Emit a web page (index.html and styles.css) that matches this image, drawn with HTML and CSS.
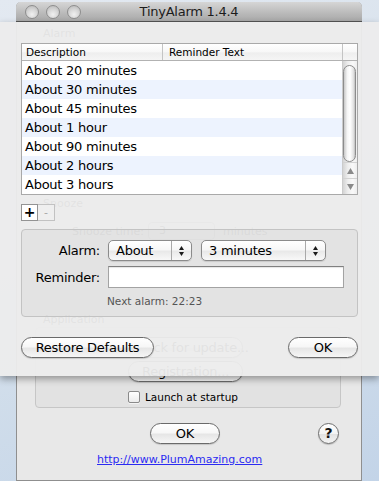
FILE: index.html
```html
<!DOCTYPE html>
<html lang="en">
<head>
<meta charset="utf-8">
<title>TinyAlarm 1.4.4</title>
<link rel="stylesheet" href="styles.css">
</head>
<body>
<div class="window">
  <div class="titlebar">
    <div class="lights">
      <span class="light"></span><span class="light"></span><span class="light"></span>
    </div>
    <div class="title">TinyAlarm 1.4.4</div>
    <div class="title-pad"></div>
  </div>
  <div class="wcontent">
    <div class="sec-h">Alarm</div>
    <div class="hidden-area"></div>
    <div class="sec-h">Snooze</div>
    <div class="snooze-row">
      <span class="snooze-label">Snooze time:</span>
      <span class="mini-pop">3</span>
      <span>minutes</span>
    </div>
    <div class="sec-h app-h">Application</div>
    <div class="appbox">
      <div class="aqua wide">Check for update...</div>
      <div class="aqua wide reg">Registration...</div>
      <div class="check-row"><span class="checkbox"></span><span>Launch at startup</span></div>
    </div>
    <div class="ok-row">
      <div class="aqua ok-main">OK</div>
      <div class="help">?</div>
    </div>
    <a class="link" href="#">http://www.PlumAmazing.com</a>
  </div>
</div>

<div class="sheet">
  <div class="table">
    <div class="thead">
      <div class="th th1">Description</div>
      <div class="th th2">Reminder Text</div>
      <div class="th thc"></div>
    </div>
    <div class="tbody">
      <div class="rows">
        <div class="row"><span class="c1">About 20 minutes</span><span class="c2"></span></div>
        <div class="row alt"><span class="c1">About 30 minutes</span><span class="c2"></span></div>
        <div class="row"><span class="c1">About 45 minutes</span><span class="c2"></span></div>
        <div class="row alt"><span class="c1">About 1 hour</span><span class="c2"></span></div>
        <div class="row"><span class="c1">About 90 minutes</span><span class="c2"></span></div>
        <div class="row alt"><span class="c1">About 2 hours</span><span class="c2"></span></div>
        <div class="row"><span class="c1">About 3 hours</span><span class="c2"></span></div>
      </div>
      <div class="scroll">
        <div class="thumb"></div>
        <div class="arrows">
          <div class="arr"><svg width="7" height="6" viewBox="0 0 7 6"><path d="M3.5 0 L7 6 L0 6 Z" fill="#8a8a8a"/></svg></div>
          <div class="arr arr-down"><svg width="7" height="6" viewBox="0 0 7 6"><path d="M0 0 L7 0 L3.5 6 Z" fill="#8a8a8a"/></svg></div>
        </div>
      </div>
    </div>
  </div>

  <div class="pm">
    <div class="pm-btn plus">+</div>
    <div class="pm-btn minus">-</div>
  </div>

  <div class="gbox">
    <div class="frow">
      <div class="flabel">Alarm:</div>
      <div class="popup pop-about">
        <span class="ptext">About</span>
        <span class="parrow"><svg width="5" height="10" viewBox="0 0 5 10"><path d="M2.5 0 L5 4 L0 4 Z M0 6 L5 6 L2.5 10 Z" fill="#1a1a1a"/></svg></span>
      </div>
      <div class="popup pop-min">
        <span class="ptext">3 minutes</span>
        <span class="parrow"><svg width="5" height="10" viewBox="0 0 5 10"><path d="M2.5 0 L5 4 L0 4 Z M0 6 L5 6 L2.5 10 Z" fill="#1a1a1a"/></svg></span>
      </div>
    </div>
    <div class="frow frow-rem">
      <div class="flabel">Reminder:</div>
      <div class="tfield"></div>
    </div>
    <div class="next">Next alarm: 22:23</div>
  </div>

  <div class="brow">
    <div class="aqua restore">Restore Defaults</div>
    <div class="aqua ok-sheet">OK</div>
  </div>
</div>
</body>
</html>
```

FILE: styles.css
```css
* { box-sizing: border-box; }
html, body { margin: 0; padding: 0; }
body {
  width: 379px;
  height: 481px;
  overflow: hidden;
  position: relative;
  background: linear-gradient(160deg, #e3e9f1 0%, #d3dfeb 55%, #c3d4e8 100%);
  font-family: "DejaVu Sans", Verdana, sans-serif;
  font-size: 13px;
  color: #000;
}

/* ---------- underlying window ---------- */
.window {
  position: absolute;
  left: 16px;
  top: 2px;
  width: 346px;
  height: 479px;
  background: #e8e8e8;
  border: 1px solid #8f8f8f;
  border-top: none;
  border-radius: 5px 5px 0 0;
}
.titlebar {
  height: 20px;
  display: flex;
  align-items: center;
  background: linear-gradient(#d6d6d6, #b9b9b9 60%, #a9a9a9);
  border-bottom: 1px solid #555;
  border-radius: 5px 5px 0 0;
  margin: 0 -1px;
}
.lights {
  display: flex;
  gap: 7px;
  padding-left: 9px;
  width: 65px;
}
.light {
  width: 14px;
  height: 14px;
  border-radius: 50%;
  border: 1px solid #8e8e8e;
  background: radial-gradient(circle at 50% 70%, #f0f0f0 0%, #d8d8d8 45%, #b4b4b4 100%);
}
.title {
  flex: 1;
  text-align: center;
  font-size: 13px;
  letter-spacing: -0.25px;
  color: #1c1c1c;
  line-height: 19px;
}
.title-pad { width: 65px; }

.wcontent {
  padding-top: 5px;
  font-size: 11px;
}
.sec-h {
  margin-left: 26px;
  height: 14px;
  line-height: 14px;
  font-size: 11px;
}
.hidden-area { height: 156px; }
.snooze-row {
  margin-top: 10px;
  height: 20px;
  display: flex;
  align-items: center;
  padding-left: 55px;
  font-size: 11px;
}
.snooze-label { width: 76px; }
.mini-pop {
  width: 67px;
  height: 18px;
  border: 1px solid #888;
  border-radius: 4px;
  padding-left: 10px;
  line-height: 16px;
  margin-right: 8px;
}
.app-h { margin-top: 72px; }
.appbox {
  margin-left: 18px;
  width: 306px;
  height: 81px;
  border: 1px solid #c6c6c6;
  border-radius: 4px;
  background: rgba(0, 0, 0, 0.025);
  padding: 9px 0 0 92px;
  display: flex;
  flex-direction: column;
  align-items: flex-start;
}
.wide {
  width: 115px;
  height: 20px;
  font-size: 11px;
  line-height: 18px;
  letter-spacing: 0;
}
.reg { margin-top: 3px; line-height: 16px; }
.check-row {
  margin-top: 9px;
  height: 12px;
  display: flex;
  align-items: center;
  gap: 5px;
  font-size: 10.5px;
  white-space: nowrap;
}
.checkbox {
  width: 12px;
  height: 12px;
  border: 1px solid #8a8a8a;
  border-radius: 2px;
  background: linear-gradient(#ffffff, #ececec);
  box-shadow: 0 1px 0 rgba(255,255,255,0.6);
}
.ok-row {
  margin-top: 15px;
  height: 21px;
  display: flex;
  align-items: center;
  padding-left: 133px;
}
.ok-main { width: 70px; }
.help {
  margin-left: 98px;
  width: 21px;
  height: 21px;
  border-radius: 50%;
  border: 1px solid #6f6f6f;
  background: linear-gradient(#ffffff, #f3f3f3 50%, #e2e2e2 55%, #f4f4f4);
  box-shadow: 0 1px 1px rgba(0,0,0,0.2);
  text-align: center;
  font-weight: bold;
  font-size: 14px;
  line-height: 19px;
  color: #111;
}
.link {
  display: block;
  margin-top: 9px;
  padding-left: 80px;
  font-size: 11px;
  line-height: 14px;
  color: #2b2bf2;
  text-decoration: underline;
}

/* ---------- aqua buttons ---------- */
.aqua {
  height: 21px;
  border: 1px solid #6a6a6a;
  border-radius: 11px;
  background: linear-gradient(#ffffff 0%, #f7f7f7 45%, #e6e6e6 55%, #f6f6f6 100%);
  box-shadow: 0 1px 1px rgba(0,0,0,0.15);
  text-align: center;
  line-height: 19px;
  font-size: 13px;
  letter-spacing: -0.25px;
  white-space: nowrap;
}

/* ---------- sheet ---------- */
.sheet {
  position: absolute;
  left: 0;
  top: 22px;
  width: 379px;
  height: 354px;
  background: rgba(236, 236, 236, 0.955);
  box-shadow: 0 3px 7px rgba(0, 0, 0, 0.35);
  padding: 21px 21px 0 21px;
  display: flex;
  flex-direction: column;
}
.table {
  height: 152px;
  border: 1px solid #a9a9a9;
  background: #fff;
  display: flex;
  flex-direction: column;
}
.thead {
  height: 17px;
  display: flex;
  border-bottom: 1px solid #b2b2b2;
  background: linear-gradient(#ffffff, #f7f7f7 50%, #eeeeee 55%, #f5f5f5);
  font-size: 10.5px;
  line-height: 16px;
}
.th1 { width: 141px; border-right: 1px solid #c4c4c4; padding-left: 4px; }
.th2 { flex: 1; padding-left: 6px; }
.thc { width: 15px; border-left: 1px solid #c4c4c4; }
.tbody { flex: 1; display: flex; }
.rows { flex: 1; }
.row {
  height: 19px;
  line-height: 19px;
  display: flex;
  font-size: 13px;
  letter-spacing: -0.25px;
}
.row.alt { background: #edf3fe; }
.c1 { width: 140px; padding-left: 3px; white-space: nowrap; }
.c2 { flex: 1; }
.scroll {
  width: 15px;
  display: flex;
  flex-direction: column;
  background: linear-gradient(to right, #d4d4d4, #eeeeee 35%, #f9f9f9 70%, #ededed);
  border-left: 1px solid #cbcbcb;
}
.thumb {
  margin-top: 4px;
  width: 13px;
  height: 97px;
  border: 1px solid #8c8c8c;
  border-radius: 7px;
  background: linear-gradient(to right, #c9c9c9, #f6f6f6 30%, #ffffff 55%, #e3e3e3 85%, #bdbdbd);
}
.arrows { margin-top: auto; }
.arr {
  height: 16px;
  display: flex;
  align-items: center;
  justify-content: center;
  border-top: 1px solid #d2d2d2;
}
.arr-down { height: 16px; }

.pm {
  margin-top: 9px;
  display: flex;
  height: 17px;
}
.pm-btn {
  width: 17px;
  height: 17px;
  text-align: center;
  line-height: 15px;
}
.plus {
  border: 1px solid #939393;
  background: #fff;
  font-weight: bold;
  font-size: 14px;
}
.minus {
  border: 1px solid #c2c2c2;
  border-left: none;
  background: #efefef;
  color: #a8a8a8;
  font-size: 11px;
}

.gbox {
  margin-top: 8px;
  height: 88px;
  border: 1px solid #c3c3c3;
  border-radius: 4px;
  background: rgba(0, 0, 0, 0.035);
  padding-top: 10px;
}
.frow {
  display: flex;
  align-items: center;
}
.frow-rem { margin-top: 5px; }
.flabel {
  width: 78px;
  margin-right: 8px;
  text-align: right;
  font-size: 13px;
  letter-spacing: -0.25px;
}
.popup {
  height: 21px;
  display: flex;
  border: 1px solid #8b8b8b;
  border-radius: 5px;
  background: linear-gradient(#ffffff, #f7f7f7 45%, #e9e9e9 55%, #f8f8f8);
  box-shadow: 0 1px 1px rgba(0,0,0,0.12);
  font-size: 13px;
  letter-spacing: -0.25px;
}
.pop-about { width: 84px; margin-right: 9px; }
.pop-min { width: 125px; }
.ptext {
  flex: 1;
  padding-left: 7px;
  line-height: 19px;
  white-space: nowrap;
}
.parrow {
  width: 20px;
  border-left: 1px solid #a9a9a9;
  display: flex;
  align-items: center;
  justify-content: center;
}
.tfield {
  width: 236px;
  height: 22px;
  background: #fff;
  border: 1px solid #a3a3a3;
  border-top-color: #808080;
  box-shadow: inset 0 1px 1px rgba(0,0,0,0.1);
}
.next {
  margin-top: 7px;
  padding-left: 85px;
  font-size: 10.5px;
  line-height: 13px;
  color: #555;
}

.brow {
  margin-top: 20px;
  display: flex;
  justify-content: space-between;
}
.restore { width: 133px; }
.ok-sheet { width: 70px; }
```
